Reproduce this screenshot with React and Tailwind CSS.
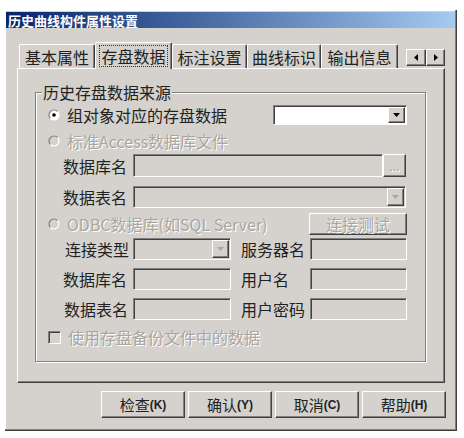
import React from 'react';

// classic 3D borders
const raised =
  'border border-t-white border-l-white border-b-[#404040] border-r-[#404040] shadow-[inset_-1px_-1px_0_#808080] bg-[#d5d2cd]';
const sunken =
  'border border-t-[#808080] border-l-[#808080] border-b-white border-r-white shadow-[inset_1px_1px_0_#404040]';
const dim = 'text-[#a9a6a1] [text-shadow:1px_1px_0_#ffffff]';

const Arrow = ({ dir = 'down', color = '#000000' }) => {
  if (dir === 'down') {
    return (
      <svg width="7" height="4" viewBox="0 0 7 4">
        <polygon points="0,0 7,0 3.5,4" fill={color} />
      </svg>
    );
  }
  return (
    <svg width="4" height="7" viewBox="0 0 4 7">
      <polygon points={dir === 'left' ? '4,0 4,7 0,3.5' : '0,0 0,7 4,3.5'} fill={color} />
    </svg>
  );
};

const Radio = ({ checked, disabled }) => (
  <svg width="12" height="12" viewBox="0 0 12 12" className="shrink-0">
    <circle cx="6" cy="6" r="5" fill={disabled ? '#d5d2cd' : '#ffffff'} />
    <path d="M2.46 9.54 A5 5 0 0 1 9.54 2.46" fill="none" stroke="#808080" strokeWidth="1.2" />
    <path d="M9.54 2.46 A5 5 0 0 1 2.46 9.54" fill="none" stroke="#ffffff" strokeWidth="1.2" />
    {checked && <circle cx="6" cy="6" r="1.8" fill="#000000" />}
  </svg>
);

const Combo = ({ className = '', white = false }) => (
  <div className={`${sunken} ${white ? 'bg-white' : 'bg-[#d5d2cd]'} h-full flex justify-end p-[1px] ${className}`}>
    <div className={`${raised} w-[17px] h-full flex items-center justify-center`}>
      <Arrow color={white ? '#000000' : '#a9a6a1'} />
    </div>
  </div>
);

const Field = ({ className = '' }) => <div className={`${sunken} bg-[#d5d2cd] h-full ${className}`} />;

const Label = ({ children, className = '' }) => (
  <div className={`text-[16px] leading-none text-[#222] ${className}`}>{children}</div>
);

const tabs = [
  { name: '基本属性', w: 'w-[76px]' },
  { name: '存盘数据', w: 'w-[77px]', active: true },
  { name: '标注设置', w: 'w-[75px]' },
  { name: '曲线标识', w: 'w-[74px]' },
  { name: '输出信息', w: 'w-[77px]' },
];

const buttons = [
  ['检查', '(K)'],
  ['确认', '(Y)'],
  ['取消', '(C)'],
  ['帮助', '(H)'],
];

export default function App() {
  return (
    <div className="w-[464px] h-[438px] bg-white pt-[10px] pl-[5px] font-['Noto_Sans_CJK_SC',sans-serif] select-none">
      <div className="w-[452px] h-[421px] bg-[#d5d2cd] border-r border-b border-[#404040] shadow-[inset_-1px_-1px_0_#808080,inset_1px_1px_0_#ffffff] pt-[2px] flex flex-col">
        {/* title bar */}
        <div className="mx-[1px] h-[16px] bg-linear-to-r from-[#0a246a] to-[#a6caf0] flex items-center pl-[2px]">
          <span className="text-[13px] leading-none font-bold text-white">历史曲线构件属性设置</span>
        </div>

        <div className="pl-[12px] mt-[14px] flex flex-col">
          {/* tabs */}
          <div className="flex items-end h-[26px] w-[428px] pl-[2px]">
            {tabs.map((t) =>
              t.active ? (
                <div
                  key={t.name}
                  className={`${t.w} h-[27px] -mb-[1px] relative z-10 bg-[#d5d2cd] border-t border-l border-white border-r border-r-[#404040] shadow-[inset_-1px_0_0_#808080] rounded-t-[2px] flex items-center justify-center`}
                >
                  <span className="border border-dotted border-[#333] px-[1px] py-[2px] text-[16px] leading-none text-[#222]">
                    {t.name}
                  </span>
                </div>
              ) : (
                <div
                  key={t.name}
                  className={`${t.w} h-[24px] border-t border-l border-white border-r border-r-[#404040] shadow-[inset_-1px_0_0_#808080] rounded-t-[2px] flex items-center justify-center text-[16px] leading-none text-[#222]`}
                >
                  {t.name}
                </div>
              )
            )}
            <div className="ml-auto mb-[2px] flex">
              <div className={`${raised} w-[20px] h-[17px] flex items-center justify-center`}>
                <Arrow dir="left" />
              </div>
              <div className={`${raised} w-[19px] h-[17px] flex items-center justify-center`}>
                <Arrow dir="right" />
              </div>
            </div>
          </div>

          {/* tab panel */}
          <div className="w-[428px] h-[315px] border border-t-white border-l-white border-b-[#404040] border-r-[#404040] shadow-[inset_-1px_-1px_0_#808080] pl-[17px] pt-[23px]">
            <div className="relative w-[391px] h-[270px] border border-[#808080] shadow-[1px_1px_0_#ffffff,inset_1px_1px_0_#ffffff] pt-[12px] pr-[18px] flex flex-col">
              <div className="absolute left-[6px] -top-[10px] h-[18px] bg-[#d5d2cd] px-[1px] flex items-center text-[16px] leading-none text-[#222]">
                历史存盘数据来源
              </div>

              {/* row 1 */}
              <div className="h-[20px] flex items-center justify-between pl-[12px]">
                <div className="flex items-center gap-[7px]">
                  <Radio checked />
                  <Label>组对象对应的存盘数据</Label>
                </div>
                <Combo white className="w-[134px]" />
              </div>

              {/* row 2 */}
              <div className="mt-[7px] h-[18px] flex items-center gap-[7px] pl-[12px]">
                <Radio disabled />
                <div className={`text-[16px] leading-none ${dim}`}>标准Access数据库文件</div>
              </div>

              {/* row 3 */}
              <div className="mt-[4px] h-[23px] flex items-center">
                <Label className="w-[97px] pl-[27px]">数据库名</Label>
                <Field className="w-[250px]" />
                <div className={`${raised} w-[23px] h-full flex items-center justify-center text-[12px] leading-none ${dim}`}>
                  ...
                </div>
              </div>

              {/* row 4 */}
              <div className="mt-[9px] h-[22px] flex items-center">
                <Label className="w-[97px] pl-[27px]">数据表名</Label>
                <Combo className="w-[273px]" />
              </div>

              {/* row 5 */}
              <div className="mt-[5px] h-[22px] flex items-center justify-between pl-[12px]">
                <div className="flex items-center gap-[7px]">
                  <Radio disabled />
                  <div className={`text-[16px] leading-none ${dim}`}>ODBC数据库(如SQL Server)</div>
                </div>
                <div className={`${raised} w-[98px] h-full flex items-center justify-center text-[16px] leading-none ${dim}`}>
                  连接测试
                </div>
              </div>

              {/* row 6 */}
              <div className="mt-[3px] h-[22px] flex items-center">
                <Label className="w-[97px] pl-[29px]">连接类型</Label>
                <Combo className="w-[98px]" />
                <Label className="ml-[10px] w-[69px]">服务器名</Label>
                <Field className="w-[97px]" />
              </div>

              {/* row 7 */}
              <div className="mt-[8px] h-[22px] flex items-center">
                <Label className="w-[97px] pl-[27px]">数据库名</Label>
                <Field className="w-[98px]" />
                <Label className="ml-[10px] w-[69px]">用户名</Label>
                <Field className="w-[97px]" />
              </div>

              {/* row 8 */}
              <div className="mt-[8px] h-[22px] flex items-center">
                <Label className="w-[97px] pl-[28px]">数据表名</Label>
                <Field className="w-[98px]" />
                <Label className="ml-[10px] w-[69px]">用户密码</Label>
                <Field className="w-[97px]" />
              </div>

              {/* row 9 */}
              <div className="mt-[8px] h-[18px] flex items-center gap-[7px] pl-[12px]">
                <div className={`${sunken} w-[13px] h-[13px] bg-[#d5d2cd] shrink-0`} />
                <div className={`text-[16px] leading-none ${dim}`}>使用存盘备份文件中的数据</div>
              </div>
            </div>
          </div>

          {/* bottom buttons */}
          <div className="mt-[8px] w-[429px] flex justify-end gap-[3px]">
            {buttons.map(([zh, key]) => (
              <div key={zh} className={`${raised} w-[84px] h-[27px] flex items-center justify-center text-[#222]`}>
                <span className="text-[15px] leading-none">{zh}</span>
                <span className="text-[12px] leading-none font-bold font-['Liberation_Sans',sans-serif]">{key}</span>
              </div>
            ))}
          </div>
        </div>
      </div>
    </div>
  );
}
